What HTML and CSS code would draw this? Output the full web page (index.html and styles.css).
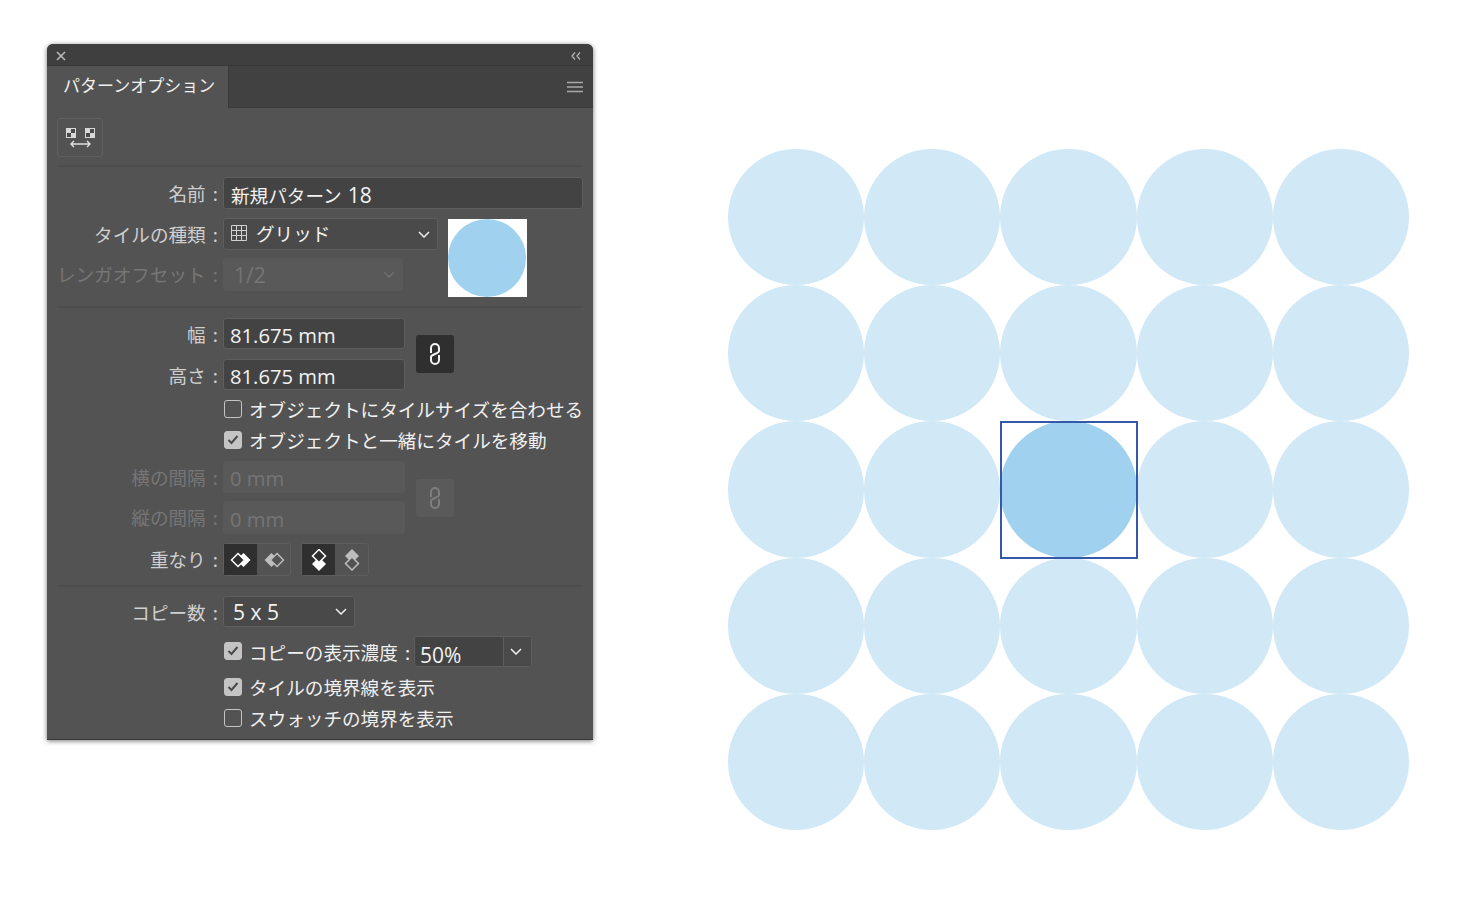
FILE: index.html
```html
<!DOCTYPE html>
<html lang="ja">
<head>
  <meta charset="UTF-8">
  <title>パターンオプション</title>
  <link rel="stylesheet" href="styles.css">
</head>
<body>
  <div class="panel">
    <div class="titlebar">
      <svg class="ico-close" viewBox="0 0 10 10"><path d="M1 1l8 8M9 1l-8 8"/></svg>
      <svg class="ico-collapse" viewBox="0 0 10 8"><path d="M4 .5L1 4l3 3.5M9 .5L6 4l3 3.5"/></svg>
    </div>
    <div class="tabbar">
      <div class="tab">パターンオプション</div>
      <svg class="ico-menu" viewBox="0 0 16 12"><path d="M0 1.500h16M0 6h16M0 10.500h16"/></svg>
    </div>

    <div class="toolrow">
      <div class="toolbtn">
        <svg viewBox="0 0 30 26" width="30" height="26">
          <path class="sq" d="M0 0h10v10H0zM19 0h10v10H19z"/>
          <path class="sq-d" d="M5 1h4v4H5zM1 5h4v4H1zM24 1h4v4h-4zM20 5h4v4h-4z"/>
          <path class="arr" d="M5 16h19M8 13l-3 3 3 3M21 13l3 3-3 3"/>
        </svg>
      </div>
    </div>
    <div class="sep"></div>

    <div class="sec sec-name">
      <div class="lbl h32">名前 :</div>
      <div class="field h32 span-rest name-val">新規パターン <span class="latin name-num">18</span></div>

      <div class="lbl h32">タイルの種類 :</div>
      <div class="field h32 sel">
        <svg class="ico-grid" viewBox="0 0 16 16"><path d="M.5.500h15v15H.5zM.5 5.500h15M.5 10.500h15M5.500.500v15M10.500.500v15"/></svg>
        <span class="sel-text">グリッド</span>
        <svg class="chev" viewBox="0 0 12 7"><path d="M1 1l5 5 5-5"/></svg>
      </div>
      <div class="swatch"><div class="swatch-dot"></div></div>

      <div class="lbl h33 off">レンガオフセット :</div>
      <div class="field h33 sel off-field short">
        <span class="latin off-text brick">1/2</span>
        <svg class="chev chev-off" viewBox="0 0 12 7"><path d="M1 1l5 5 5-5"/></svg>
      </div>
    </div>
    <div class="sep"></div>

    <div class="sec sec-size">
      <div class="lbl h31">幅 :</div>
      <div class="field h31 num latin">81.675 mm</div>
      <div class="link on">
        <svg viewBox="0 0 12 24"><path d="M2 11V6a4 4 0 0 1 8 0v3c0 3-8 3-8 6v3a4 4 0 0 0 8 0v-5"/></svg>
      </div>

      <div class="lbl h31">高さ :</div>
      <div class="field h31 num latin">81.675 mm</div>

      <label class="chk wide"><span class="box"></span>オブジェクトにタイルサイズを合わせる</label>
      <label class="chk wide"><span class="box checked"><svg viewBox="0 0 12 10"><path d="M1.500 5l3 3 6-7"/></svg></span>オブジェクトと一緒にタイルを移動</label>

      <div class="lbl h32 off">横の間隔 :</div>
      <div class="field h32 num latin off-field off-text">0 mm</div>
      <div class="link dim">
        <svg viewBox="0 0 12 24"><path d="M2 11V6a4 4 0 0 1 8 0v3c0 3-8 3-8 6v3a4 4 0 0 0 8 0v-5"/></svg>
      </div>

      <div class="lbl h33 off">縦の間隔 :</div>
      <div class="field h33 num latin off-field off-text">0 mm</div>

      <div class="lbl h33">重なり :</div>
      <div class="overlaps wide">
        <div class="seg">
          <div class="seg-btn on">
            <svg viewBox="0 0 22 16"><path class="fill-w" d="M13.500 1l7 7-7 7-7-7z"/><path class="line-w" d="M8 1.500L14.500 8 8 14.500 1.500 8z"/></svg>
          </div>
          <div class="seg-btn">
            <svg viewBox="0 0 22 16"><path class="fill-g" d="M8.500 1l7 7-7 7-7-7z"/><path class="line-g" d="M14 1.500L20.500 8 14 14.500 7.500 8z"/></svg>
          </div>
        </div>
        <div class="seg">
          <div class="seg-btn on">
            <svg viewBox="0 0 16 22"><path class="fill-w" d="M8 8l7 7-7 7-7-7z"/><path class="line-w" d="M8 .500L14.500 7 8 13.500 1.500 7z"/></svg>
          </div>
          <div class="seg-btn">
            <svg viewBox="0 0 16 22"><path class="fill-g" d="M8 0l7 7-7 7-7-7z"/><path class="line-g" d="M8 8L14.500 14.500 8 21 1.500 14.500z"/></svg>
          </div>
        </div>
      </div>
    </div>
    <div class="sep"></div>

    <div class="sec sec-copy">
      <div class="lbl h31">コピー数 :</div>
      <div class="field h31 sel copies">
        <span class="latin copies-text">5 x 5</span>
        <svg class="chev" viewBox="0 0 12 7"><path d="M1 1l5 5 5-5"/></svg>
      </div>

      <div class="opacity-row wide">
        <label class="chk"><span class="box checked"><svg viewBox="0 0 12 10"><path d="M1.500 5l3 3 6-7"/></svg></span>コピーの表示濃度 :</label>
        <div class="combo">
          <div class="combo-val latin">50%</div>
          <div class="combo-btn"><svg class="chev" viewBox="0 0 12 7"><path d="M1 1l5 5 5-5"/></svg></div>
        </div>
      </div>

      <label class="chk wide"><span class="box checked"><svg viewBox="0 0 12 10"><path d="M1.500 5l3 3 6-7"/></svg></span>タイルの境界線を表示</label>
      <label class="chk wide"><span class="box"></span>スウォッチの境界を表示</label>
    </div>
  </div>

  <div class="pattern">
    <div class="dot"></div><div class="dot"></div><div class="dot"></div><div class="dot"></div><div class="dot"></div>
    <div class="dot"></div><div class="dot"></div><div class="dot"></div><div class="dot"></div><div class="dot"></div>
    <div class="dot"></div><div class="dot"></div><div class="dot main"></div><div class="dot"></div><div class="dot"></div>
    <div class="dot"></div><div class="dot"></div><div class="dot"></div><div class="dot"></div><div class="dot"></div>
    <div class="dot"></div><div class="dot"></div><div class="dot"></div><div class="dot"></div><div class="dot"></div>
  </div>
</body>
</html>
```

FILE: styles.css
```css
*{
  box-sizing: border-box;
}
body{
  margin: 0;
  padding: 44px 0 0 47px;
  display: flex;
  align-items: flex-start;
  background: #fff;
  font-family: "Noto Sans CJK JP", "Noto Sans", sans-serif;
}
.latin{
  font-family: "Open Sans", "Noto Sans CJK JP", sans-serif;
}

/* panel */
.panel{
  width: 546px;
  height: 696px;
  background: #535353;
  border-radius: 6px 6px 0 0;
  box-shadow: 0 1px 5px rgba(0,0,0,.55);
  border-bottom: 1px solid #3a3a3a;
  color: #ececec;
  font-size: 18.6px;
  overflow: hidden;
}
.titlebar{
  height: 22px;
  background: #3f3f3f;
  border-bottom: 1px solid #373737;
  display: flex;
  align-items: center;
  justify-content: space-between;
  padding: 2px 12px 0 9px;
}
.ico-close{
  width: 10px;
  height: 10px;
  fill: none;
  stroke: #bdbdbd;
  stroke-width: 1.5;
}
.ico-collapse{
  width: 10px;
  height: 8px;
  fill: none;
  stroke: #b0b0b0;
  stroke-width: 1.3;
}
.tabbar{
  height: 42px;
  background: #414141;
  display: flex;
  align-items: center;
  justify-content: space-between;
  padding-right: 10px;
  box-shadow: inset 0 -1px 0 #3a3a3a;
}
.tab{
  width: 182px;
  height: 42px;
  background: #535353;
  padding-left: 16px;
  font-size: 17px;
  line-height: 38px;
  color: #f0f0f0;
  border-right: 1px solid #3a3a3a;
}
.ico-menu{
  width: 16px;
  height: 12px;
  fill: none;
  stroke: #a8a8a8;
  stroke-width: 1.5;
}

.toolrow{
  height: 57px;
  padding: 10px 0 0 10px;
}
.toolbtn{
  width: 46px;
  height: 39px;
  border: 1px solid #5f5f5f;
  border-radius: 3px;
  padding: 9px 0 0 8px;
  display: flex;
}
.sq{ fill: #d8d8d8; }
.sq-d{ fill: #4a4a4a; }
.arr{
  fill: none;
  stroke: #e0e0e0;
  stroke-width: 1.4;
}

.sep{
  height: 2px;
  margin: 0 10px;
  background: #4c4c4c;
}

/* rows */
.sec{
  display: grid;
  grid-template-columns: 171px 182px 1fr;
  column-gap: 5px;
  align-items: start;
}
.lbl{
  grid-column: 1;
  text-align: right;
  color: #cfcfcf;
  white-space: nowrap;
  line-height: 32px;
  word-spacing: 3px;
}
.lbl.off{
  color: #767676;
}
.h31{ height: 31px; }
.h32{ height: 32px; }
.h33{ height: 33px; }
.wide{
  grid-column: 2 / -1;
}
.span-rest{
  grid-column: 2 / -1;
  width: 360px;
}
.field{
  grid-column: 2;
  background: #434343;
  border: 1px solid #5e5e5e;
  border-radius: 3px;
  color: #f2f2f2;
  display: flex;
  align-items: center;
  white-space: pre;
  padding-left: 7px;
}
.name-val{
  padding-top: 2px;
}
.name-num{
  font-size: 21px;
  margin: 1px 0 0 2px;
}
.num{
  font-size: 20.2px;
  padding: 2px 0 0 6px;
}
.sel{
  background: #4a4a4a;
  position: relative;
}
.sel-text{
  padding-left: 9px;
  margin-top: -3px;
}
.ico-grid{
  width: 16px;
  height: 16px;
  fill: none;
  stroke: #d0d0d0;
  stroke-width: 1;
  margin-top: -3px;
}
.chev{
  width: 12px;
  height: 7px;
  fill: none;
  stroke: #efefef;
  stroke-width: 1.5;
  margin-left: auto;
}
.off-field{
  background: #595959;
  border-color: #595959;
}
.off-text{
  color: #757575;
}
.brick{
  padding-left: 3px;
  font-size: 21px;
}
.chev-off{
  stroke: #6f6f6f;
}

/* name block */
.sec-name{
  grid-template-columns: 171px 215px 79px 1fr;
  grid-template-rows: 41px 40px 33px;
  padding-top: 10px;
  height: 139px;
}
.sec-name .sel{
  padding-right: 7px;
}
.swatch{
  grid-column: 3;
  grid-row: 2 / span 2;
  margin: 1px 0 0 5px;
  width: 79px;
  height: 78px;
  background: #fff;
}
.swatch-dot{
  width: 78px;
  height: 78px;
  border-radius: 50%;
  background: #a0d2ef;
}
.short{
  width: 180px;
}

/* size block */
.sec-size{
  grid-template-rows: 41px 40px 31px 31px 40px 42px 33px;
  padding-top: 10px;
  height: 277px;
}
.link{
  grid-column: 3;
  margin-left: 6px;
  width: 38px;
  height: 38px;
  border-radius: 3px;
  display: flex;
  align-items: center;
  justify-content: center;
  align-self: center;
}
.link svg{
  width: 12px;
  height: 24px;
  fill: none;
  stroke-width: 2;
}
.sec-size .link.on{
  grid-row: 1 / span 2;
  background: #2f2f2f;
  margin-top: -10px;
}
.link.on svg{
  stroke: #f4f4f4;
}
.sec-size .link.dim{
  grid-row: 5 / span 2;
  background: #5a5a5a;
  margin-top: -8px;
}
.link.dim svg{
  stroke: #7e7e7e;
}

.chk{
  display: flex;
  align-items: center;
  gap: 7px;
  height: 19px;
  padding-left: 1px;
  color: #f0f0f0;
  white-space: nowrap;
  word-spacing: 3px;
}
.box{
  flex: none;
  width: 18px;
  height: 18px;
  border: 1.5px solid #c4c4c4;
  border-radius: 3px;
  display: flex;
  align-items: center;
  justify-content: center;
}
.box.checked{
  background: #c4c4c4;
}
.box svg{
  width: 12px;
  height: 10px;
  fill: none;
  stroke: #4a4a4a;
  stroke-width: 2;
}

.overlaps{
  display: flex;
  gap: 10px;
}
.seg{
  display: flex;
  width: 68px;
  height: 33px;
  border: 1px solid #5e5e5e;
  border-radius: 3px;
}
.seg-btn{
  flex: 1;
  display: flex;
  align-items: center;
  justify-content: center;
}
.seg-btn.on{
  background: #2f2f2f;
}
.seg-btn svg{
  width: 22px;
  height: 22px;
}
.fill-w{ fill: #fff; }
.line-w{ fill: #2f2f2f; stroke: #fff; stroke-width: 1.5; }
.fill-g{ fill: #bdbdbd; }
.line-g{ fill: #535353; stroke: #bdbdbd; stroke-width: 1.5; }

/* copies block */
.sec-copy{
  grid-template-rows: 40px 41px 31px 19px;
  padding-top: 9px;
}
.copies{
  width: 132px;
  padding: 0 7px 0 9px;
  background: #494949;
}
.copies-text{
  font-size: 21px;
}
.opacity-row{
  display: flex;
  align-items: center;
  gap: 4px;
  height: 31px;
}
.opacity-row .chk{
  margin-top: -1px;
}
.combo{
  display: flex;
  width: 118px;
  height: 31px;
  border: 1px solid #5e5e5e;
  border-radius: 3px;
  background: #434343;
}
.combo-val{
  width: 89px;
  padding: 5px 0 0 5px;
  font-size: 21px;
  line-height: 26px;
  color: #f2f2f2;
  border-right: 1px solid #5e5e5e;
}
.combo-btn{
  flex: 1;
  display: flex;
  align-items: center;
  justify-content: center;
  background: #4a4a4a;
}
.combo-btn .chev{
  margin: 0 4px 0 0;
}

/* artboard */
.pattern{
  margin: 105px 0 0 135px;
  display: grid;
  grid-template-columns: repeat(5, 136.2px);
  grid-auto-rows: 136.2px;
}
.dot{
  border-radius: 50%;
  background: #d1e8f6;
}
.dot.main{
  background: #a0d2ef;
  position: relative;
}
.dot.main::after{
  content: "";
  position: absolute;
  inset: 0 -1px -1px 0;
  border: 2px solid #3559aa;
}
```
